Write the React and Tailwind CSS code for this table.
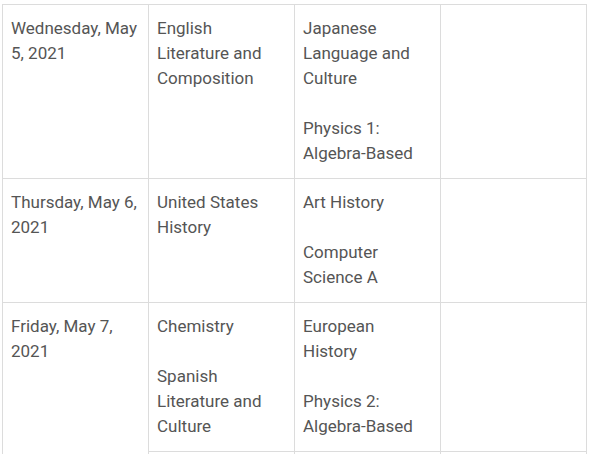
import React from "react";

const rows = [
  {
    date: "Wednesday, May 5, 2021",
    morning: ["English Literature and Composition"],
    afternoon: ["Japanese Language and Culture", "Physics 1: Algebra-Based"],
    late: [],
  },
  {
    date: "Thursday, May 6, 2021",
    morning: ["United States History"],
    afternoon: ["Art History", "Computer Science A"],
    late: [],
  },
  {
    date: "Friday, May 7, 2021",
    morning: ["Chemistry", "Spanish Literature and Culture"],
    afternoon: ["European History", "Physics 2: Algebra-Based"],
    late: [],
    span: true,
  },
];

const Cell = ({ items, rowSpan }) => (
  <td
    rowSpan={rowSpan}
    className="border border-[#dcdcdc] px-2 pt-[11px] pb-[12px] align-top"
  >
    {items.map((item, i) => (
      <React.Fragment key={i}>
        {i > 0 && (
          <>
            <br />
            <br />
          </>
        )}
        {item}
      </React.Fragment>
    ))}
  </td>
);

const App = () => {
  return (
    <div className="bg-white h-screen pt-[4px] pl-[2px] overflow-hidden">
      <table
        className="w-[585px] table-fixed border-collapse text-[17px] leading-[25px] text-[#555555]"
        style={{ fontFamily: "Roboto, 'Liberation Sans', sans-serif" }}
      >
        <colgroup>
          <col className="w-[146px]" />
          <col className="w-[146px]" />
          <col className="w-[146px]" />
          <col className="w-[146px]" />
        </colgroup>
        <tbody>
          {rows.map((row, i) => (
            <tr key={i}>
              <Cell items={[row.date]} rowSpan={row.span ? 2 : 1} />
              <Cell items={row.morning} />
              <Cell items={row.afternoon} />
              <Cell items={row.late} />
            </tr>
          ))}
          <tr className="h-[40px]">
            <Cell items={[]} />
            <Cell items={[]} />
            <Cell items={[]} />
          </tr>
        </tbody>
      </table>
    </div>
  );
};

export default App;
